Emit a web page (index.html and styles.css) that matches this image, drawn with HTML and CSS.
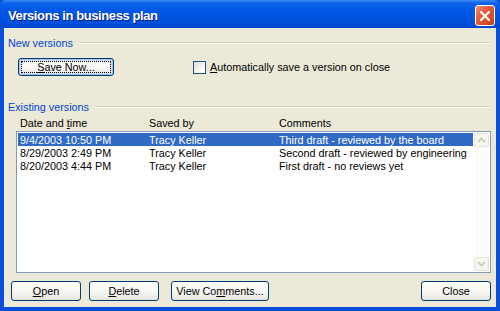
FILE: index.html
```html
<!DOCTYPE html>
<html lang="en">
<head>
  <meta charset="UTF-8">
  <title>Versions in business plan</title>
  <link rel="stylesheet" href="styles.css">
</head>
<body>

<div class="window">
  <!-- 제목 표시줄 -->
  <div class="titlebar">
    <span class="title">Versions in business plan</span>
    <button class="close-x" aria-label="Close">
      <svg width="12" height="12" viewBox="0 0 12 12">
        <path d="M2 2 L10 10 M10 2 L2 10" stroke="#fff" stroke-width="2.2" stroke-linecap="round"/>
      </svg>
    </button>
  </div>

  <div class="client">
    <!-- 새 버전 -->
    <div class="group-title"><span>New versions</span><div class="rule"></div></div>
    <div class="save-row">
      <button class="btn btn-default save-btn"><u>S</u>ave Now...</button>
      <label class="check">
        <span class="box"></span>
        <span><u>A</u>utomatically save a version on close</span>
      </label>
    </div>

    <!-- 기존 버전 -->
    <div class="group-title existing"><span>Existing versions</span><div class="rule"></div></div>
    <div class="cols">
      <span class="c1">Date and <u>t</u>ime</span>
      <span class="c2">Saved by</span>
      <span class="c3">Comments</span>
    </div>

    <div class="list">
      <div class="rows">
        <div class="row selected">
          <span class="c1">9/4/2003 10:50 PM</span>
          <span class="c2">Tracy Keller</span>
          <span class="c3">Third draft - reviewed by the board</span>
        </div>
        <div class="row">
          <span class="c1">8/29/2003 2:49 PM</span>
          <span class="c2">Tracy Keller</span>
          <span class="c3">Second draft - reviewed by engineering</span>
        </div>
        <div class="row">
          <span class="c1">8/20/2003 4:44 PM</span>
          <span class="c2">Tracy Keller</span>
          <span class="c3">First draft - no reviews yet</span>
        </div>
      </div>
      <div class="scrollbar">
        <div class="arrow">
          <svg width="9" height="6" viewBox="0 0 9 6"><path d="M1 5 L4.5 1.5 L8 5" fill="none" stroke="#c9c7ba" stroke-width="1.6"/></svg>
        </div>
        <div class="arrow">
          <svg width="9" height="6" viewBox="0 0 9 6"><path d="M1 1 L4.5 4.5 L8 1" fill="none" stroke="#c9c7ba" stroke-width="1.6"/></svg>
        </div>
      </div>
    </div>

    <!-- 하단 버튼 -->
    <div class="buttons">
      <button class="btn btn-small"><u>O</u>pen</button>
      <button class="btn btn-small delete"><u>D</u>elete</button>
      <button class="btn btn-view">View Co<u>m</u>ments...</button>
      <button class="btn btn-small close-btn">Close</button>
    </div>
  </div>
</div>

</body>
</html>
```

FILE: styles.css
```css
body {
  margin: 0;
  font-family: "Liberation Sans", Arial, sans-serif;
  font-size: 10.8px;
  color: #000;
  background: #fff;
}

u {
  text-decoration: underline;
  text-underline-offset: 1px;
}

/* 창 틀 */
.window {
  width: 500px;
  height: 311px;
  background: #0a4fd9;
  display: flex;
  flex-direction: column;
  box-sizing: border-box;
  padding: 0 4px 4px 4px;
}

.titlebar {
  height: 28px;
  margin: 0 -4px;
  padding: 0 5px 0 8px;
  display: flex;
  align-items: center;
  justify-content: space-between;
  background: linear-gradient(to bottom, #3d8df5 0, #0d63e8 3px, #0058e6 10px, #0052dd 22px, #0046c8 28px);
  border-radius: 6px 6px 0 0;
}

.title {
  color: #fff;
  font-weight: bold;
  font-size: 13px;
  letter-spacing: -0.4px;
  padding-top: 3px;
  text-shadow: 1px 1px 0 #0a1a8a;
}

.close-x {
  width: 20px;
  height: 21px;
  margin-top: 3px;
  padding: 0;
  border: 1px solid #fff;
  border-radius: 3px;
  background: linear-gradient(135deg, #f0917a 0, #e2603f 35%, #cc3a17 100%);
  display: flex;
  justify-content: center;
  align-items: center;
}

/* 본문 */
.client {
  flex: 1;
  background: #ece9d8;
  padding: 9px 5px 0 4px;
  display: flex;
  flex-direction: column;
}

.group-title {
  display: flex;
  align-items: center;
  height: 13px;
  margin-top: -1px;
  color: #0046d5;
}

.group-title .rule {
  flex: 1;
  margin-left: 6px;
  border-top: 1px solid #d0d0bf;
  border-bottom: 1px solid #fff;
}

.save-row {
  display: flex;
  align-items: center;
  margin-top: 9px;
  padding-left: 10px;
  height: 18px;
}

.check {
  display: flex;
  align-items: center;
  margin-left: 79px;
  gap: 4px;
}

.check .box {
  width: 11px;
  height: 11px;
  border: 1px solid #1c5180;
  background: linear-gradient(135deg, #dcdcd7 0, #fff 80%);
}

.existing {
  margin-top: 24px;
}

.cols {
  display: flex;
  height: 13px;
  align-items: center;
  margin-top: 3px;
  padding-left: 12px;
}

.c1 {
  width: 129px;
}

.c2 {
  width: 130px;
}

.list {
  margin: 2px 0 0 8px;
  height: 142px;
  box-sizing: border-box;
  border: 1px solid #7f9db9;
  background: #fff;
  display: flex;
  padding: 1px;
}

.rows {
  flex: 1;
  margin-right: 1px;
}

.row {
  display: flex;
  height: 13px;
  align-items: center;
  padding-left: 2px;
  white-space: nowrap;
}

.row.selected {
  background: #316ac5;
  color: #fff;
}

.scrollbar {
  width: 15px;
  background: #fcfcf9;
  display: flex;
  flex-direction: column;
  justify-content: space-between;
}

.arrow {
  height: 14px;
  box-sizing: border-box;
  border: 1px solid #e6e4dc;
  border-radius: 2px;
  background: #f6f5ef;
  display: flex;
  justify-content: center;
  align-items: center;
}

/* 버튼 */
.btn {
  font-family: "Liberation Sans", Arial, sans-serif;
  font-size: 10.8px;
  color: #000;
  padding: 0;
  border: 1px solid #003c74;
  border-radius: 3px;
  background: linear-gradient(to bottom, #ffffff 0, #f6f5f1 60%, #e3e2da 100%);
  box-sizing: border-box;
}

.btn-default {
  box-shadow: inset 0 0 0 1px #a6c3ee, inset 0 0 0 2px #cedcf4;
  outline: 1px dotted #000;
  outline-offset: -4px;
}

.save-btn {
  width: 96px;
  height: 18px;
}

.buttons {
  display: flex;
  margin-top: 8px;
  padding-left: 3px;
  height: 20px;
}

.btn-small {
  width: 70px;
  height: 20px;
}

.delete {
  margin-left: 8px;
}

.btn-view {
  width: 98px;
  height: 20px;
  margin-left: 12px;
}

.close-btn {
  margin-left: auto;
}
```
